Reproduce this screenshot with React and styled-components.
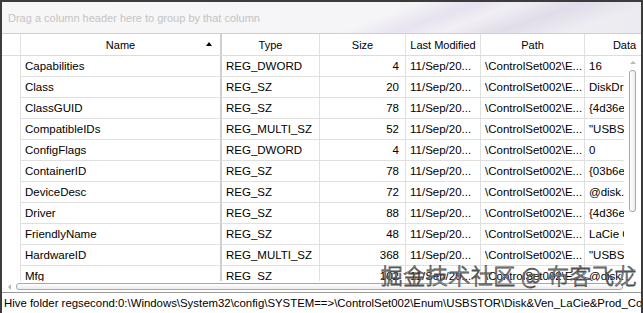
import React from 'react';
import styled, { createGlobalStyle } from 'styled-components';

const GlobalStyle = createGlobalStyle`
  html, body {
    margin: 0;
    padding: 0;
    background: #ffffff;
  }
  body {
    font-family: "Liberation Sans", Arial, sans-serif;
    font-size: 11px;
    color: #000;
  }
`;

const COLS = '19px 201px 98px 86px 75px 104px 80px';

const Window = styled.div`
  position: relative;
  width: 643px;
  height: 313px;
  box-sizing: border-box;
  border-top: 2px solid #3c3c3c;
  border-left: 2px solid #3c3c3c;
  border-right: 2px solid #3c3c3c;
  display: flex;
  flex-direction: column;
  overflow: hidden;
  background: #fff;
`;

const GroupPanel = styled.div`
  height: 31px;
  flex: none;
  display: flex;
  align-items: center;
  padding-left: 6px;
  color: #c4c4c4;
  font-size: 11px;
  border-bottom: 1px solid #cfcfcf;
  background:
    linear-gradient(160deg, transparent 0 58%, rgba(226, 220, 236, 0.7) 66%, rgba(240, 236, 246, 0.4) 72%, rgba(214, 208, 226, 0.6) 80%, transparent 90%),
    linear-gradient(90deg, #f7f7f7 0%, #f5f4f7 60%, #ecebf1 100%);
`;

const Header = styled.div`
  display: grid;
  grid-template-columns: ${COLS};
  height: 21px;
  flex: none;
  border-bottom: 1px solid #dcdcdc;
  background: #fff;
`;

const HeadCell = styled.div`
  position: relative;
  display: flex;
  align-items: center;
  justify-content: center;
  white-space: nowrap;
  overflow: hidden;
  font-size: 11px;
  border-right: ${(p) => (p.$thick ? '2px solid #cfcfcf' : '1px solid #e2e2e2')};
`;

const SortArrow = styled.span`
  position: absolute;
  right: 8px;
  top: 8px;
  width: 0;
  height: 0;
  border-left: 3px solid transparent;
  border-right: 3px solid transparent;
  border-bottom: 4px solid #000;
`;

const Body = styled.div`
  flex: 1;
  display: flex;
  min-height: 0;
`;

const Rows = styled.div`
  flex: 1;
  overflow: hidden;
`;

const Row = styled.div`
  display: grid;
  grid-template-columns: ${COLS};
  height: 21px;
`;

const Cell = styled.div`
  display: flex;
  align-items: center;
  justify-content: ${(p) => (p.$right ? 'flex-end' : 'flex-start')};
  padding: 0 ${(p) => (p.$right ? '6px' : '4px')};
  white-space: nowrap;
  overflow: hidden;
  font-size: 11.5px;
  border-bottom: ${(p) => (p.$indicator ? 'none' : '1px solid #e0e0e0')};
  border-right: ${(p) => (p.$thick ? '2px solid #cfcfcf' : '1px solid #e0e0e0')};
`;

const VScroll = styled.div`
  width: 17px;
  flex: none;
  background: #fff;
  display: flex;
  flex-direction: column;
  align-items: center;
  padding-top: 5px;
  box-sizing: border-box;
`;

const ArrowUp = styled.span`
  width: 0;
  height: 0;
  border-left: 3px solid transparent;
  border-right: 3px solid transparent;
  border-bottom: 3px solid #b8b8b8;
`;

const ArrowDown = styled.span`
  width: 0;
  height: 0;
  margin-top: auto;
  margin-bottom: 9px;
  border-left: 3px solid transparent;
  border-right: 3px solid transparent;
  border-top: 3px solid #b8b8b8;
`;

const VThumb = styled.div`
  width: 5px;
  height: 140px;
  margin-top: 6px;
  border: 1px solid #a8a8a8;
  border-radius: 3px;
  background: linear-gradient(90deg, #fff, #ececec);
`;

const HScroll = styled.div`
  height: 11px;
  flex: none;
  display: flex;
  align-items: center;
  padding-left: 6px;
  gap: 5px;
  border-bottom: 1px solid #9a9a9a;
  background: #fff;
`;

const ArrowLeft = styled.span`
  width: 0;
  height: 0;
  border-top: 3px solid transparent;
  border-bottom: 3px solid transparent;
  border-right: 3px solid #b8b8b8;
`;

const HThumb = styled.div`
  flex: 1;
  height: 5px;
  margin-right: 18px;
  border: 1px solid #a8a8a8;
  border-radius: 3px;
  background: linear-gradient(180deg, #fff, #ececec);
`;

const StatusBar = styled.div`
  height: 20px;
  flex: none;
  display: flex;
  align-items: center;
  padding-left: 2px;
  white-space: nowrap;
  overflow: hidden;
  font-size: 11.4px;
  background: #fff;
`;

const Watermark = styled.div`
  position: absolute;
  right: 4px;
  bottom: 23px;
  font-family: "Noto Sans CJK SC", sans-serif;
  font-size: 22px;
  font-weight: 300;
  letter-spacing: 0.5px;
  color: #ffffff;
  -webkit-text-stroke: 0.8px #444;
  opacity: 0.92;
  pointer-events: none;
`;

const rows = [
  ['Capabilities', 'REG_DWORD', '4', '16'],
  ['Class', 'REG_SZ', '20', 'DiskDrive'],
  ['ClassGUID', 'REG_SZ', '78', '{4d36e967'],
  ['CompatibleIDs', 'REG_MULTI_SZ', '52', '"USBSTOR'],
  ['ConfigFlags', 'REG_DWORD', '4', '0'],
  ['ContainerID', 'REG_SZ', '78', '{03b6e1'],
  ['DeviceDesc', 'REG_SZ', '72', '@disk.inf'],
  ['Driver', 'REG_SZ', '88', '{4d36e967'],
  ['FriendlyName', 'REG_SZ', '48', 'LaCie Coo'],
  ['HardwareID', 'REG_MULTI_SZ', '368', '"USBSTOR'],
  ['Mfg', 'REG_SZ', '102', '@disk.inf'],
];

function App() {
  return (
    <>
      <GlobalStyle />
      <Window>
        <GroupPanel>Drag a column header here to group by that column</GroupPanel>
        <Header>
          <HeadCell />
          <HeadCell $thick>
            Name
            <SortArrow />
          </HeadCell>
          <HeadCell>Type</HeadCell>
          <HeadCell>Size</HeadCell>
          <HeadCell>Last Modified</HeadCell>
          <HeadCell>Path</HeadCell>
          <HeadCell>Data</HeadCell>
        </Header>
        <Body>
          <Rows>
            {rows.map(([name, type, size, data]) => (
              <Row key={name}>
                <Cell $indicator />
                <Cell $thick>{name}</Cell>
                <Cell>{type}</Cell>
                <Cell $right>{size}</Cell>
                <Cell>11/Sep/20...</Cell>
                <Cell>\ControlSet002\E...</Cell>
                <Cell>{data}</Cell>
              </Row>
            ))}
          </Rows>
          <VScroll>
            <ArrowUp />
            <VThumb />
            <ArrowDown />
          </VScroll>
        </Body>
        <HScroll>
          <ArrowLeft />
          <HThumb />
        </HScroll>
        <StatusBar>
          Hive folder regsecond:0:\Windows\System32\config\SYSTEM==&gt;\ControlSet002\Enum\USBSTOR\Disk&amp;Ven_LaCie&amp;Prod_CooKey&amp;Rev_0001
        </StatusBar>
        <Watermark>掘金技术社区 @ 布客飞龙</Watermark>
      </Window>
    </>
  );
}

export default App;
